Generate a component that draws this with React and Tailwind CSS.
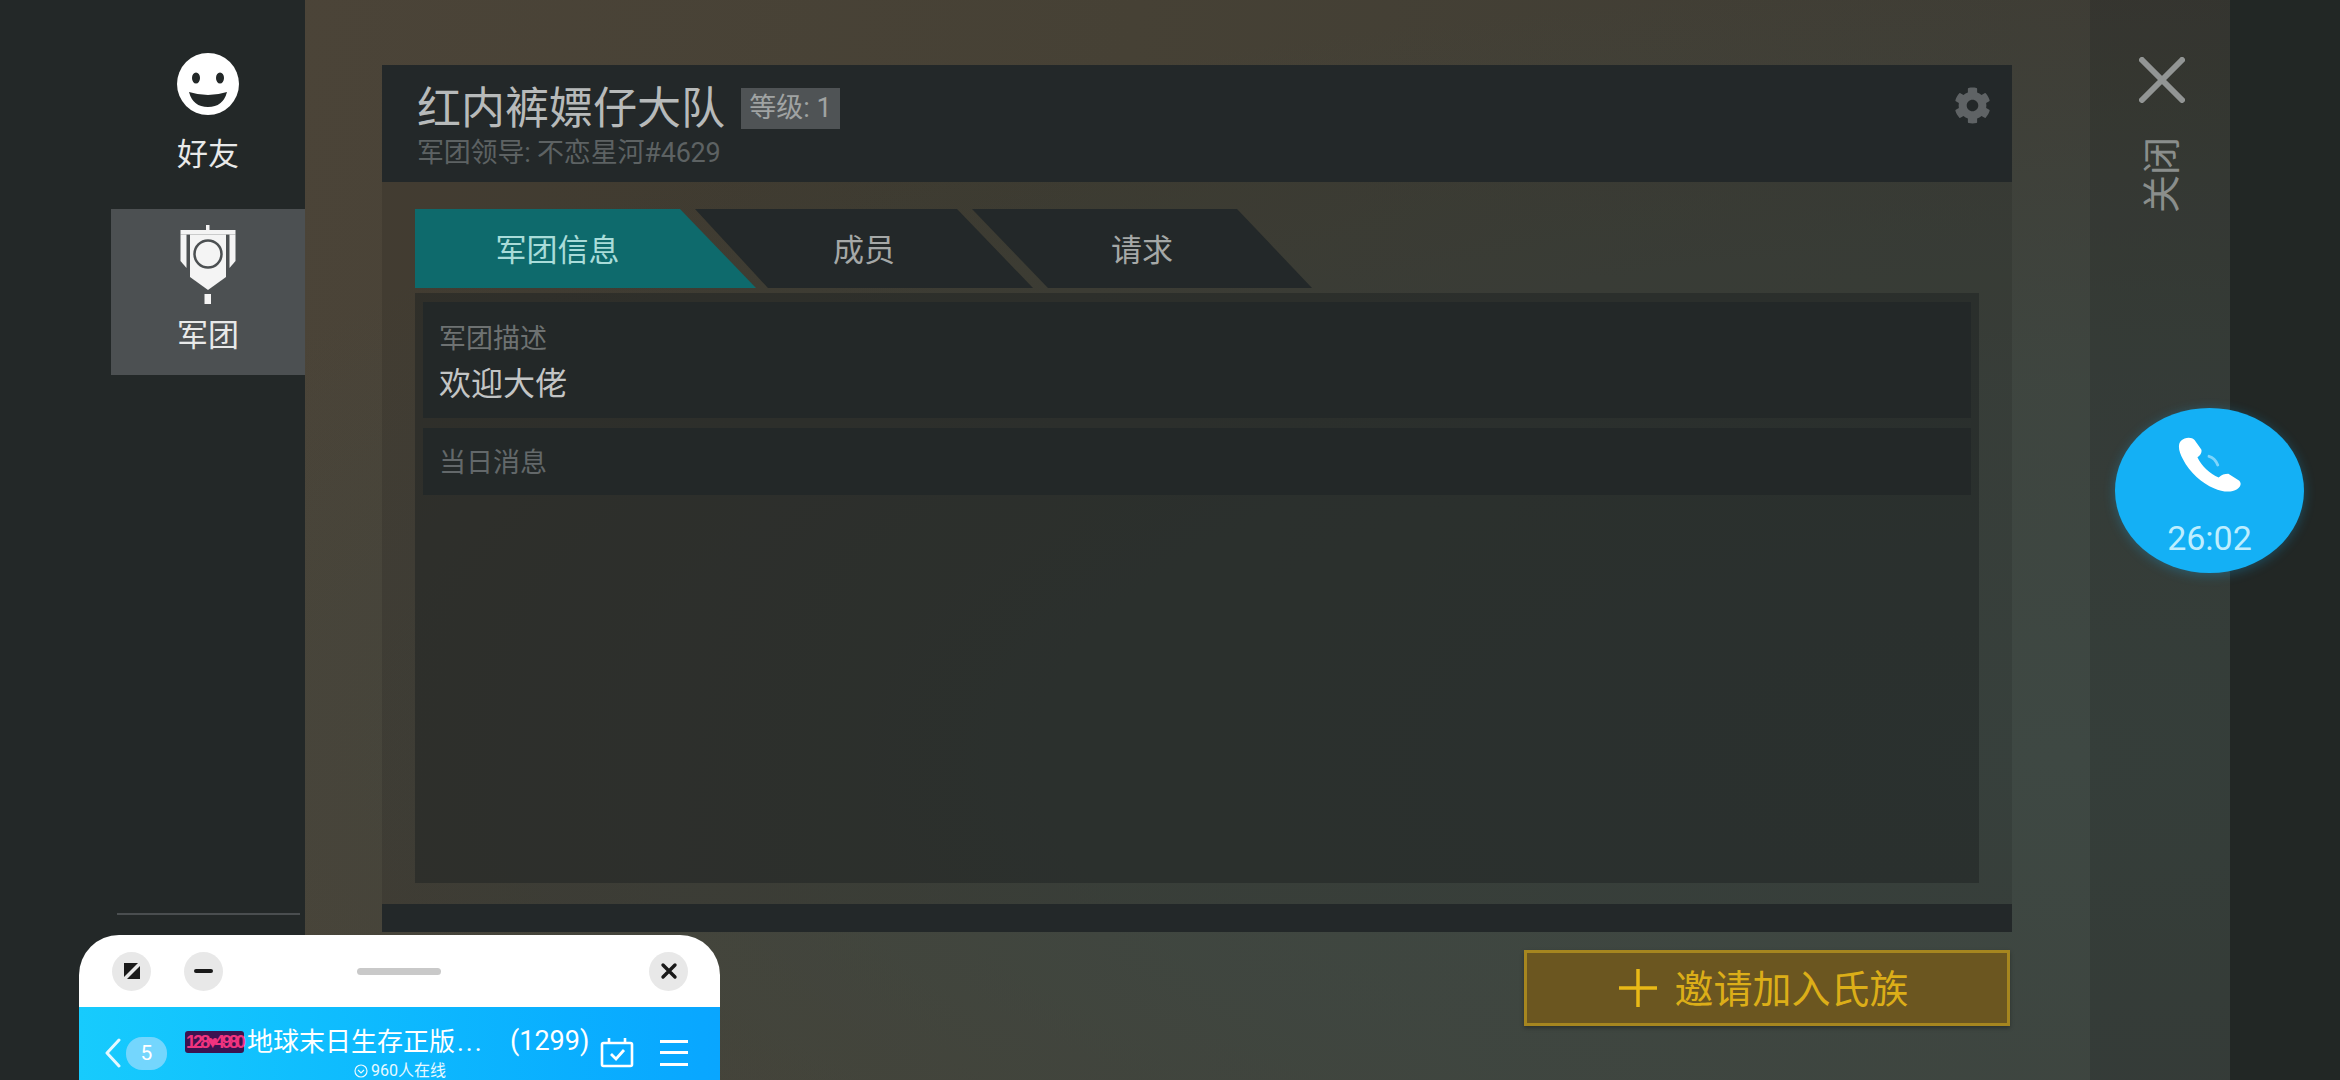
import React from "react";
import { FaCog } from "react-icons/fa";

const CJK = { fontFamily: 'Roboto, "Noto Sans CJK SC", sans-serif' };

function Smile() {
  return (
    <svg width="64" height="64" viewBox="0 0 64 64">
      <circle cx="32" cy="32" r="31" fill="#ffffff" />
      <ellipse cx="20" cy="26" rx="4" ry="5.5" fill="#232828" />
      <ellipse cx="44" cy="26" rx="4" ry="5.5" fill="#232828" />
      <path d="M13 40 Q32 46 51 40 Q47 55 32 55 Q17 55 13 40 Z" fill="#232828" />
    </svg>
  );
}

function Banner() {
  return (
    <svg width="56" height="80" viewBox="0 0 56 80" fill="#f4f4f4">
      <rect x="26" y="0" width="3.5" height="6" />
      <rect x="0.5" y="5" width="55" height="4.5" />
      <path d="M0.5 9.5H6.5V43L0.5 36Z" />
      <path d="M55.5 9.5H49.5V43L55.5 36Z" />
      <path d="M10 9.5H46V52L28 65L10 52Z" />
      <circle cx="28" cy="29" r="13.5" fill="none" stroke="#4c5052" strokeWidth="2.5" />
      <rect x="24.5" y="69" width="6.5" height="10" />
    </svg>
  );
}

function Tab({ label, active, className, clip }) {
  return (
    <div
      className={`h-[79px] pt-[4px] flex items-center justify-center text-[31px] leading-none ${active ? "bg-[#0e6a6c] text-[#a9dcd9]" : "bg-[#232829] text-[#a5a8a7]"} ${className}`}
      style={{ clipPath: clip }}
    >
      {label}
    </div>
  );
}

function FloatingWindow() {
  return (
    <div className="absolute left-[79px] top-[935px] w-[641px] h-[145px] rounded-t-[40px] overflow-hidden bg-white flex flex-col" style={CJK}>
      <div className="h-[72px] flex items-center pl-[33px] pr-[32px] shrink-0">
        <div className="w-[39px] h-[39px] rounded-full bg-[#e8e8e8] flex items-center justify-center">
          <svg width="18" height="18" viewBox="0 0 18 18">
            <path d="M1 1H15L1 15Z" fill="#1a1a1a" />
            <path d="M17 4V17H4Z" fill="#1a1a1a" />
          </svg>
        </div>
        <div className="w-[39px] h-[39px] rounded-full bg-[#e8e8e8] flex items-center justify-center ml-[33px]">
          <div className="w-[19px] h-[4px] rounded-full bg-[#1a1a1a]" />
        </div>
        <div className="w-[84px] h-[7px] rounded-full bg-[#c9c9c9] ml-[134px]" />
        <div className="w-[39px] h-[39px] rounded-full bg-[#e8e8e8] flex items-center justify-center ml-auto">
          <svg width="18" height="18" viewBox="0 0 18 18" stroke="#1a1a1a" strokeWidth="3.4" strokeLinecap="round">
            <path d="M3 3L15 15M15 3L3 15" />
          </svg>
        </div>
      </div>
      <div className="flex-1 bg-gradient-to-r from-[#17cbfd] to-[#09a6ff] relative text-white">
        <div className="flex items-center h-[66px] pl-[25px]">
          <svg width="18" height="30" viewBox="0 0 18 30" fill="none" stroke="#e4f8ff" strokeWidth="3" strokeLinecap="round" strokeLinejoin="round" className="mt-[26px]">
            <path d="M15 2L3 15L15 28" />
          </svg>
          <div className="w-[41px] h-[33px] rounded-[16px] bg-[#74d6fd] flex items-center justify-center text-[21px] leading-none ml-[4px] mt-[27px]">5</div>
          <div className="ml-[18px] w-[59px] h-[22px] mt-[4px] rounded-[3px] bg-[#3b1350] flex items-center justify-center shrink-0">
            <span className="text-[#f0337f] text-[18px] leading-none font-bold tracking-[-3px] whitespace-nowrap" style={{ fontFamily: '"Liberation Sans", sans-serif' }}>128♥4980</span>
          </div>
          <div className="ml-[3px] mt-[3px] text-[26px] leading-none whitespace-nowrap w-[263px]">
            地球末日生存正版<span className="tracking-[2px] ml-[2px]">...</span>
          </div>
          <div className="mt-[2px] text-[27px] leading-none whitespace-nowrap">(1299)</div>
          <svg width="34" height="30" viewBox="0 0 34 30" fill="none" stroke="#ffffff" strokeWidth="2.6" className="ml-[11px] mt-[26px]">
            <rect x="2" y="5" width="30" height="23" rx="1.5" />
            <path d="M9 0V6M25 0V6" />
            <path d="M11 16L16 21L24 12" strokeWidth="2.8" />
          </svg>
          <div className="ml-[26px] w-[28px] flex flex-col gap-[8.5px] mt-[25px]">
            <div className="h-[3px] bg-white" />
            <div className="h-[3px] bg-white" />
            <div className="h-[3px] bg-white" />
          </div>
        </div>
        <div className="absolute left-[275px] top-[56px] flex items-center gap-[3px] text-[16px] leading-none whitespace-nowrap text-[#e8f9ff]">
          <svg width="14" height="14" viewBox="0 0 14 14" fill="none" stroke="#e8f9ff" strokeWidth="1.2">
            <circle cx="7" cy="7" r="6" />
            <path d="M4 6L7 9L10 6" />
          </svg>
          <span>960人在线</span>
        </div>
      </div>
    </div>
  );
}

function CallBubble() {
  return (
    <div className="absolute left-[2115px] top-[408px] w-[189px] h-[165px] rounded-[50%] bg-[#14b0f5] shadow-[0_2px_12px_rgba(20,176,245,0.3)] flex flex-col items-center pt-[29px]" style={CJK}>
      <svg width="64" height="56" viewBox="0 0 66 58" fill="#ffffff">
        <path d="M3 4C7 0 14 0 17 3L24 13C25 16 23 19 20 21C24 30 33 38 42 42C45 39 48 38 52 38L63 45C66 48 65 51 61 54C55 58 46 57 37 53C25 48 12 37 5 23C1 16 -1 8 3 4Z" />
        <path d="M32 20C36 21 39 24 41 29" fill="none" stroke="#7fd5fb" strokeWidth="3" strokeLinecap="round" />
      </svg>
      <div className="text-[34px] leading-none mt-[28px] text-[#bdeeff]">26:02</div>
    </div>
  );
}

export default function App() {
  return (
    <div
      className="w-[2340px] h-[1080px] relative overflow-hidden flex bg-[radial-gradient(ellipse_at_88%_70%,#3e4843_0%,rgba(62,72,67,0.75)_35%,rgba(62,72,67,0)_72%),linear-gradient(100deg,#4d4539_0%,#464135_45%,#3d3c35_90%)]"
      style={CJK}
    >
      <aside className="w-[305px] h-full bg-[#232828] flex flex-col items-end shrink-0">
        <div className="w-[194px] h-[209px] flex flex-col items-center pt-[52px]">
          <Smile />
          <span className="text-[31px] leading-none mt-[23px] text-[#e8e9e9]">好友</span>
        </div>
        <div className="w-[194px] h-[166px] bg-[#4c5052] flex flex-col items-center pt-[16px]">
          <Banner />
          <span className="text-[31px] leading-none mt-[15px] text-[#e8e9e9]">军团</span>
        </div>
        <div className="w-[183px] h-[2px] bg-[#4a4e50] mr-[5px] mt-[538px]" />
      </aside>

      <main className="w-[1707px] pl-[77px] pt-[65px] flex flex-col shrink-0">
        <header className="h-[117px] bg-[#232829] flex items-start pl-[35px] pr-[21px] relative">
          <div className="flex flex-col">
            <div className="flex items-center pt-[20px]">
              <span className="text-[44px] leading-[48px] text-[#b7baba] whitespace-nowrap">红内裤嫖仔大队</span>
              <span className="ml-[16px] mt-[-2px] h-[41px] w-[99px] bg-[#4f5355] text-[#a0a3a3] text-[27px] leading-none flex items-center justify-center whitespace-nowrap">等级: 1</span>
            </div>
            <span className="text-[27px] leading-none mt-[7px] tracking-[-0.2px] text-[#5d6263] whitespace-nowrap">军团领导: 不恋星河#4629</span>
          </div>
          <FaCog className="ml-auto mt-[22px] text-[#5f6365]" size={37} />
        </header>

        <section className="h-[722px] bg-[rgba(20,22,22,0.15)] pt-[27px] px-[33px] flex flex-col">
          <div className="flex">
            <Tab label="军团信息" active className="w-[341px] pr-[56px]" clip="polygon(0 0, 265px 0, 100% 100%, 0 100%)" />
            <Tab label="成员" className="w-[338px] -ml-[61px]" clip="polygon(0 0, 262px 0, 100% 100%, 73px 100%)" />
            <Tab label="请求" className="w-[340px] -ml-[61px]" clip="polygon(0 0, 265px 0, 100% 100%, 76px 100%)" />
          </div>
          <div className="mt-[5px] h-[590px] bg-[rgba(30,33,33,0.5)] px-[8px] pt-[9px] flex flex-col gap-[10px]">
            <div className="h-[116px] bg-[#232828] pl-[16px] pt-[24px] flex flex-col">
              <span className="text-[27px] leading-none text-[#6e7272]">军团描述</span>
              <span className="text-[32px] leading-none mt-[15px] text-[#c3c5c5]">欢迎大佬</span>
            </div>
            <div className="h-[67px] pt-[3px] bg-[#232828] pl-[16px] flex items-center">
              <span className="text-[27px] leading-none text-[#63686a]">当日消息</span>
            </div>
          </div>
        </section>

        <div className="h-[28px] bg-[#232829] shrink-0" />

        <div className="flex justify-end pr-[2px] pt-[18px]">
          <button className="w-[486px] h-[76px] pt-[4px] pr-[6px] bg-[#6b5620] border-[3px] border-[#a6861f] shadow-[0_2px_4px_rgba(0,0,0,0.3)] flex items-center justify-center gap-[17px] text-[#dcae18]" style={CJK}>
            <svg width="38" height="38" viewBox="0 0 38 38" stroke="#e9b916" strokeWidth="3.5" className="mt-[-4px]">
              <path d="M0 19H38M19 0V38" />
            </svg>
            <span className="text-[39px] leading-none whitespace-nowrap">邀请加入氏族</span>
          </button>
        </div>
      </main>

      <div className="w-[78px] shrink-0" />

      <div className="w-[140px] shrink-0 bg-[rgba(25,28,28,0.22)] flex flex-col items-center pt-[57px]">
        <svg width="46" height="46" viewBox="0 0 46 46" stroke="#929594" strokeWidth="6" strokeLinecap="round" className="ml-[3px]">
          <path d="M3 3L43 43M43 3L3 43" />
        </svg>
        <div className="mt-[35px] h-[74px] w-[38px] flex items-center justify-center ml-[3px]">
          <span className="text-[38px] leading-none whitespace-nowrap text-[#8a8e8c] -rotate-90">关闭</span>
        </div>
      </div>

      <div className="flex-1 bg-[#222725]" />

      <CallBubble />
      <FloatingWindow />
    </div>
  );
}
